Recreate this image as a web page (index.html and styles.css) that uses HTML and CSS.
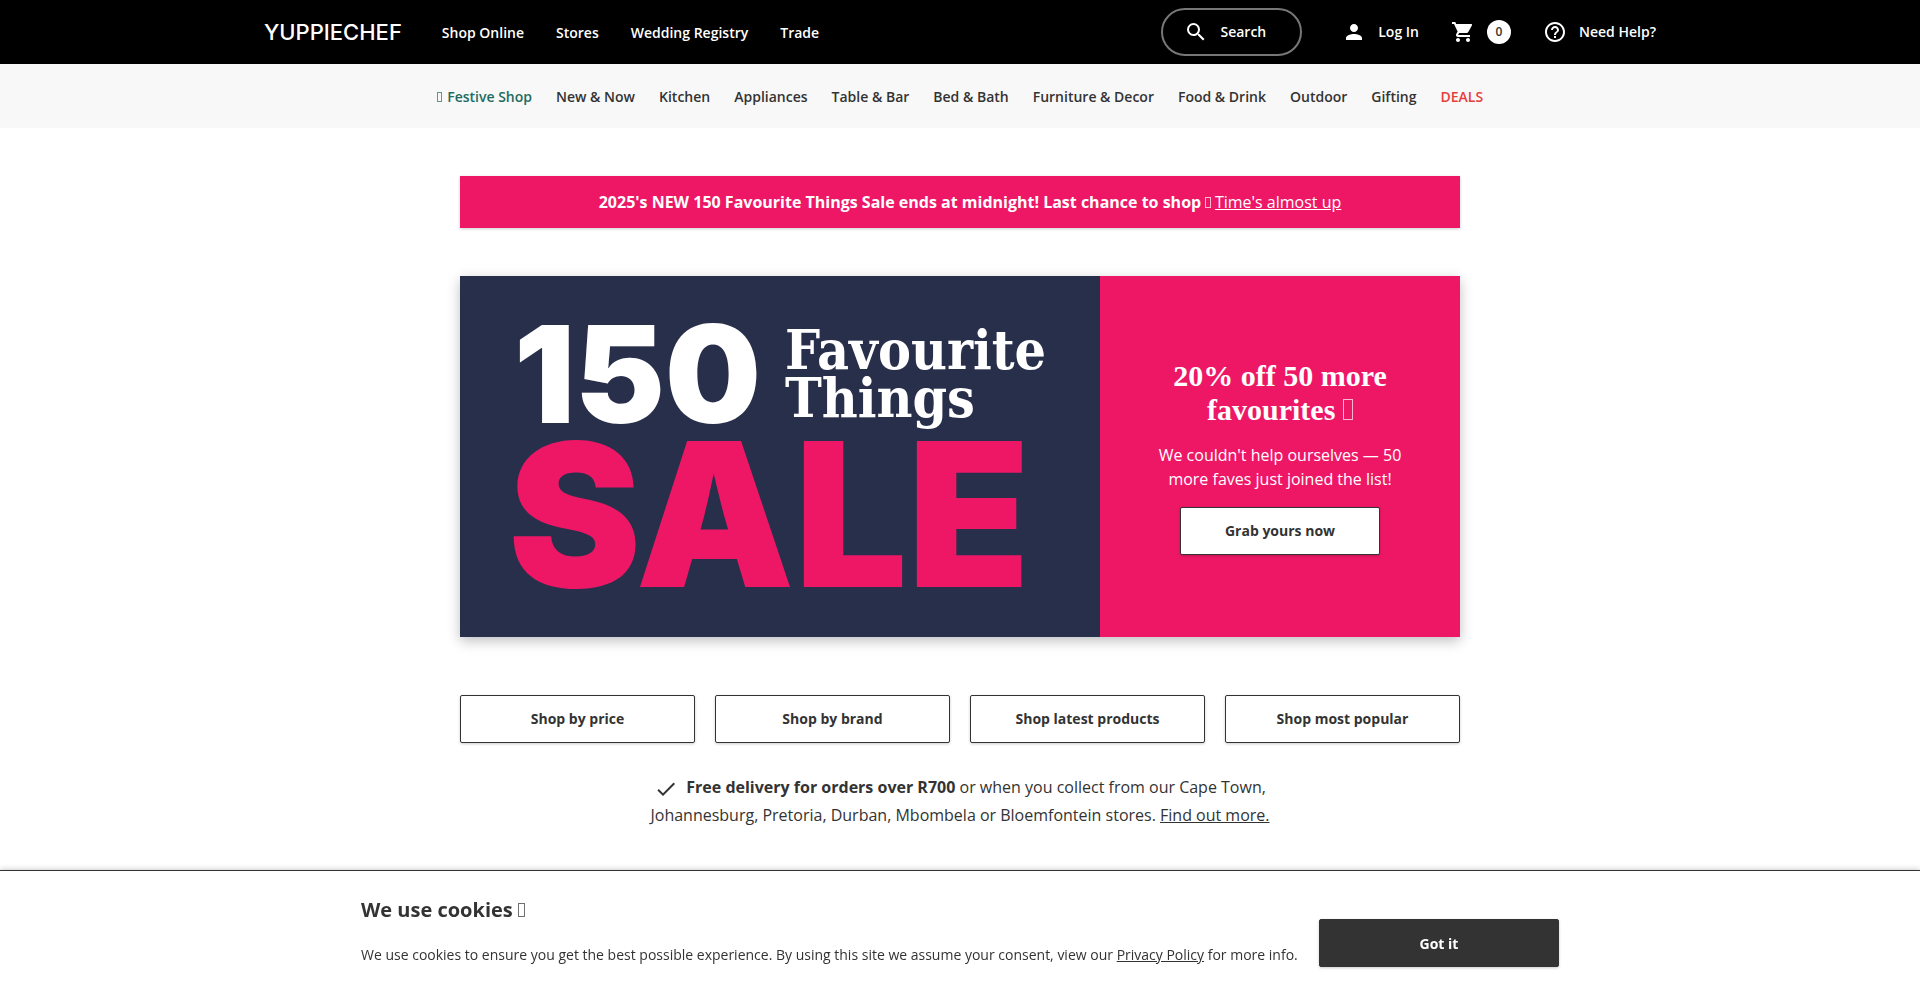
FILE: index.html
```html
<!DOCTYPE html>
<html lang="en">
<head>
    <meta charset="utf-8">
    <meta name="viewport" content="width=device-width, initial-scale=1">
    <title>Yuppiechef</title>
    <link rel="stylesheet" href="styles.css">
</head>
<body>
    <header class="header">
        <div class="header-inner">
            <a class="logo" href="#">YUPPIECHEF</a>
            <nav class="main-nav">
                <a href="#">Shop Online</a>
                <a href="#">Stores</a>
                <a href="#">Wedding Registry</a>
                <a href="#">Trade</a>
            </nav>
            <button class="search" type="button">
                <svg class="icon" viewBox="0 0 24 24"><path d="M15.5 14h-.79l-.28-.27A6.471 6.471 0 0 0 16 9.5 6.5 6.5 0 1 0 9.5 16c1.61 0 3.09-.59 4.23-1.57l.27.28v.79l5 4.99L20.49 19l-4.99-5zm-6 0C7.01 14 5 11.99 5 9.5S7.01 5 9.5 5 14 7.01 14 9.5 11.99 14 9.5 14z"/></svg>
                Search
            </button>
            <div class="tools">
                <a href="#">
                    <svg class="icon" viewBox="0 0 24 24"><path d="M12 12c2.21 0 4-1.79 4-4s-1.79-4-4-4-4 1.79-4 4 1.79 4 4 4zm0 2c-2.67 0-8 1.34-8 4v2h16v-2c0-2.66-5.33-4-8-4z"/></svg>
                    Log In
                </a>
                <a href="#" aria-label="Cart">
                    <svg class="icon" viewBox="0 0 24 24"><path d="M7 18c-1.1 0-1.99.9-1.99 2S5.9 22 7 22s2-.9 2-2-.9-2-2-2zM1 2v2h2l3.6 7.59-1.35 2.45c-.16.28-.25.61-.25.96 0 1.1.9 2 2 2h12v-2H7.42c-.14 0-.25-.11-.25-.25l.03-.12.9-1.63h7.45c.75 0 1.41-.41 1.75-1.03l3.58-6.49A1 1 0 0 0 20 4H5.21l-.94-2H1zm16 16c-1.1 0-1.99.9-1.99 2s.89 2 1.99 2 2-.9 2-2-.9-2-2-2z"/></svg>
                    <span class="count">0</span>
                </a>
                <a href="#">
                    <svg class="icon" viewBox="0 0 24 24"><path d="M11 18h2v-2h-2v2zm1-16C6.48 2 2 6.48 2 12s4.48 10 10 10 10-4.48 10-10S17.52 2 12 2zm0 18c-4.41 0-8-3.59-8-8s3.59-8 8-8 8 3.59 8 8-3.59 8-8 8zm0-14c-2.21 0-4 1.79-4 4h2c0-1.1.9-2 2-2s2 .9 2 2c0 2-3 1.75-3 5h2c0-2.25 3-2.5 3-5 0-2.21-1.79-4-4-4z"/></svg>
                    Need Help?
                </a>
            </div>
        </div>
    </header>

    <nav class="categories">
        <a class="festive" href="#"><span class="glyph"></span> Festive Shop</a>
        <a href="#">New &amp; Now</a>
        <a href="#">Kitchen</a>
        <a href="#">Appliances</a>
        <a href="#">Table &amp; Bar</a>
        <a href="#">Bed &amp; Bath</a>
        <a href="#">Furniture &amp; Decor</a>
        <a href="#">Food &amp; Drink</a>
        <a href="#">Outdoor</a>
        <a href="#">Gifting</a>
        <a class="deals" href="#">DEALS</a>
    </nav>

    <main class="main">
        <p class="promo"><strong>2025's NEW 150 Favourite Things Sale ends at midnight! Last chance to shop</strong> <span class="glyph"></span> <a href="#">Time's almost up</a></p>

        <section class="hero">
            <a class="hero-art" href="#">
                <span class="hero-top">
                    <span class="hero-number">150</span>
                    <span class="hero-things">Favourite<br>Things</span>
                </span>
                <span class="hero-sale">SALE</span>
            </a>
            <div class="hero-text">
                <h2>20% off 50 more favourites <span class="glyph"></span></h2>
                <p>We couldn't help ourselves — 50 more faves just joined the list!</p>
                <a class="button" href="#">Grab yours now</a>
            </div>
        </section>

        <div class="shortcuts">
            <a class="button" href="#">Shop by price</a>
            <a class="button" href="#">Shop by brand</a>
            <a class="button" href="#">Shop latest products</a>
            <a class="button" href="#">Shop most popular</a>
        </div>

        <p class="delivery">
            <svg class="icon" viewBox="0 0 24 24"><path d="M9 16.17L4.83 12l-1.42 1.41L9 19 21 7l-1.41-1.41z"/></svg>
            <strong>Free delivery for orders over R700</strong> or when you collect from our Cape Town, Johannesburg, Pretoria, Durban, Mbombela or Bloemfontein stores. <a href="#">Find out more.</a>
        </p>
    </main>

    <div class="cookies">
        <div class="cookies-inner">
            <div>
                <h3>We use cookies <span class="glyph"></span></h3>
                <p>We use cookies to ensure you get the best possible experience. By using this site we assume your consent, view our <a href="#">Privacy Policy</a> for more info.</p>
            </div>
            <button class="button button-dark" type="button">Got it</button>
        </div>
    </div>
</body>
</html>
```

FILE: styles.css
```css
* {
    box-sizing: border-box;
}

body {
    margin: 0;
    font-family: "Open Sans", sans-serif;
    font-size: 16px;
    line-height: 24px;
    color: #333;
    background: #fff;
}

h2,
h3,
p {
    margin: 0;
}

a {
    color: inherit;
}

.icon {
    width: 24px;
    height: 24px;
    fill: currentColor;
    flex-shrink: 0;
}

/* small empty box that sits on the text baseline */
.glyph {
    display: inline-block;
    width: 0.34em;
    height: 0.7em;
    border: 1px solid currentColor;
    opacity: 0.7;
}

/* header */
.header {
    background: #000;
    color: #fff;
    font-size: 14px;
    font-weight: 600;
}

.header a {
    text-decoration: none;
}

.header-inner {
    display: flex;
    align-items: center;
    max-width: 1440px;
    height: 64px;
    margin: 0 auto;
    padding: 0 24px;
}

.logo {
    font-family: Inter, sans-serif;
    font-size: 22px;
    font-weight: 500;
}

.main-nav {
    display: flex;
    gap: 32px;
    margin-left: 40px;
    padding-top: 2px;
}

.search {
    display: flex;
    align-items: center;
    gap: 12px;
    height: 48px;
    margin-left: auto;
    padding: 0 34px 0 21px;
    border: 2px solid #777;
    border-radius: 24px;
    background: none;
    color: #fff;
    font: inherit;
    cursor: pointer;
}

.tools {
    display: flex;
    gap: 32px;
    margin-left: 40px;
}

.tools a {
    display: flex;
    align-items: center;
    gap: 12px;
}

.count {
    width: 24px;
    height: 24px;
    border-radius: 50%;
    background: #fff;
    color: #333;
    font-size: 12px;
    text-align: center;
}

/* categories */
.categories {
    display: flex;
    justify-content: center;
    align-items: center;
    gap: 24px;
    height: 64px;
    padding-top: 2px;
    background: #f8f8f8;
    font-size: 14px;
    font-weight: 600;
}

.categories a {
    text-decoration: none;
}

.categories .festive {
    color: #216b60;
}

.categories .glyph {
    margin-right: 2px;
}

.categories .deals {
    color: #e53e3e;
}

/* main */
.main {
    max-width: 1000px;
    margin: 0 auto;
    padding: 48px 0 164px;
}

.promo {
    padding: 14px 0 14px 20px;
    background: #ee1766;
    color: #fff;
    text-align: center;
    box-shadow: 0 1px 3px rgba(0, 0, 0, 0.2);
}

.hero {
    display: grid;
    grid-template-columns: 16fr 9fr;
    margin-top: 48px;
    box-shadow: 0 4px 12px rgba(0, 0, 0, 0.25);
}

.hero-art {
    padding: 40px 48px;
    background: #282f4b;
    color: #fff;
    text-decoration: none;
}

.hero-top {
    display: flex;
    align-items: center;
    gap: 24px;
    padding-left: 6px;
}

.hero-number {
    font-family: Inter, sans-serif;
    font-size: 135px;
    font-weight: 900;
    line-height: 116px;
}

.hero-things {
    font-family: "DejaVu Serif Condensed", "DejaVu Serif", serif;
    font-size: 55px;
    font-weight: bold;
    line-height: 48px;
}

.hero-sale {
    display: block;
    font-family: Inter, sans-serif;
    font-size: 200px;
    font-weight: 900;
    line-height: 165px;
    color: #ee1766;
}

.hero-text {
    display: flex;
    flex-direction: column;
    align-items: center;
    justify-content: center;
    gap: 16px;
    padding: 0 56px;
    background: #ee1766;
    color: #fff;
    text-align: center;
}

.hero-text h2 {
    font-family: "Liberation Serif", serif;
    font-size: 30px;
    line-height: 34px;
}

.button {
    display: flex;
    align-items: center;
    justify-content: center;
    height: 48px;
    border: 1px solid #333;
    border-radius: 2px;
    background: #fff;
    color: #333;
    font-family: inherit;
    font-size: 14px;
    font-weight: 700;
    text-decoration: none;
    box-shadow: 0 1px 3px rgba(0, 0, 0, 0.2);
}

.hero-text .button {
    width: 200px;
}

.button-dark {
    width: 240px;
    flex-shrink: 0;
    background: #333;
    color: #fff;
    cursor: pointer;
}

.shortcuts {
    display: grid;
    grid-template-columns: repeat(4, 1fr);
    gap: 20px;
    margin-top: 58px;
}

.delivery {
    max-width: 640px;
    margin: 30px auto 0;
    line-height: 28px;
    text-align: center;
}

.delivery .icon {
    margin-right: 4px;
    vertical-align: middle;
}

/* cookie bar */
.cookies {
    position: fixed;
    left: 0;
    right: 0;
    bottom: 0;
    border-top: 1px solid #333;
    background: #fff;
    box-shadow: 0 0 6px rgba(0, 0, 0, 0.25);
}

.cookies-inner {
    display: flex;
    align-items: flex-end;
    justify-content: space-between;
    max-width: 1198px;
    margin: 0 auto;
    padding: 24px 0 26px;
}

.cookies h3 {
    margin-bottom: 18px;
    font-size: 20px;
    line-height: 30px;
}

.cookies p {
    font-size: 14px;
}
```
